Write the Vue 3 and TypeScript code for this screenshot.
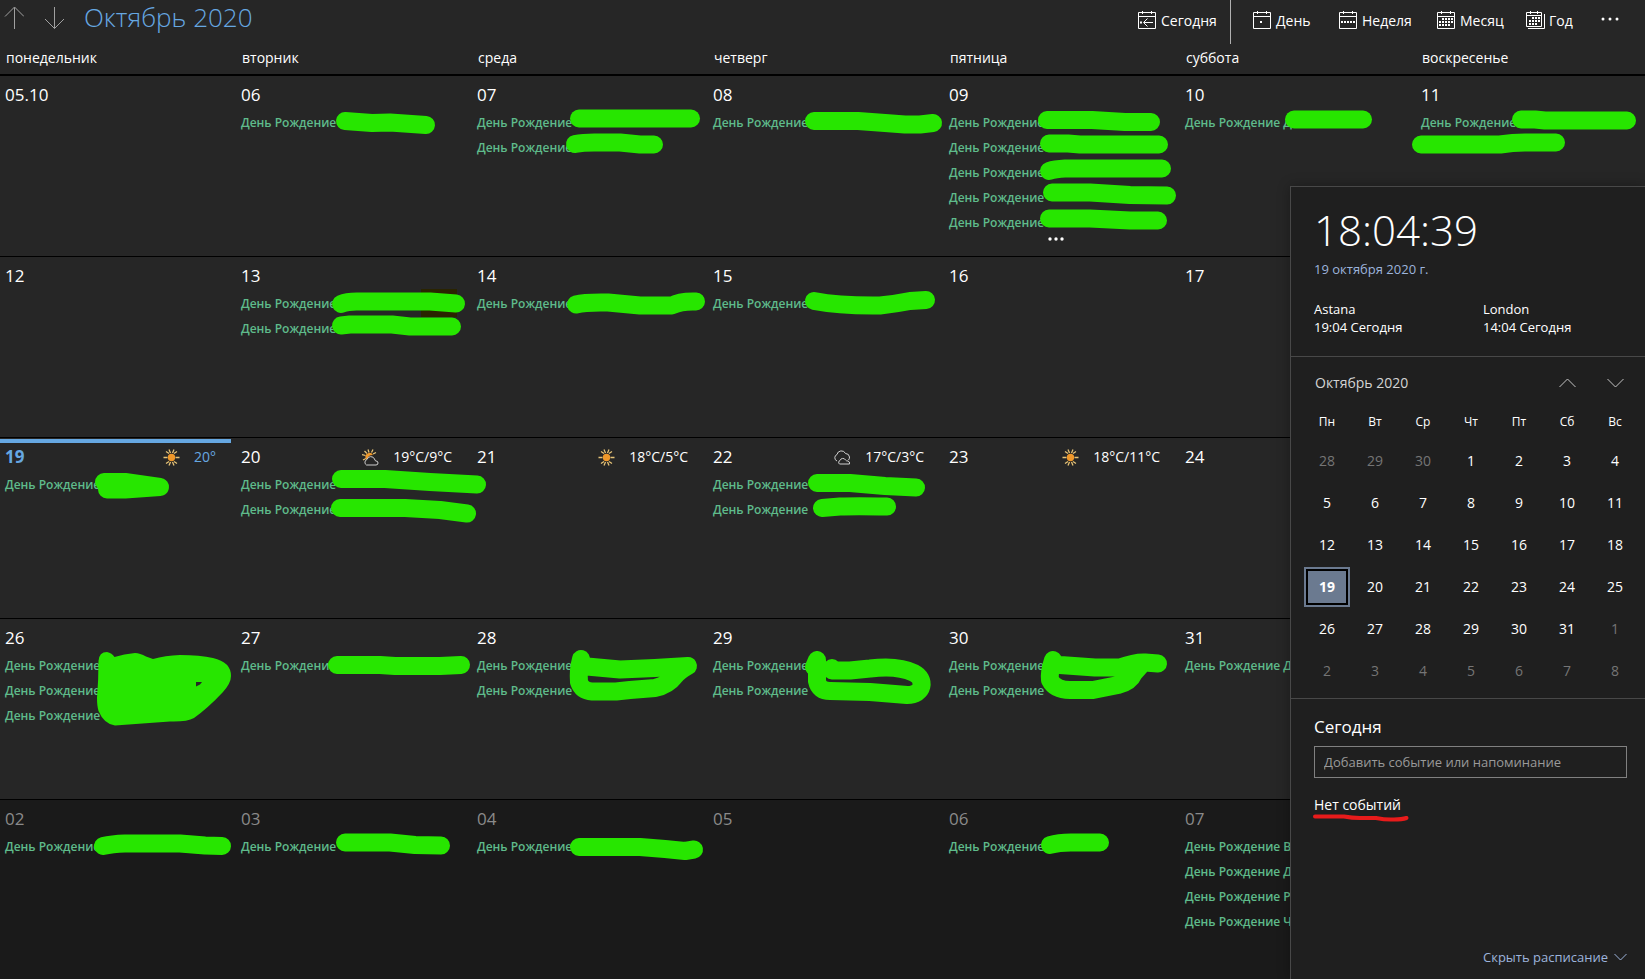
<script setup lang="ts">
type Sky = 'sun' | 'partly' | 'cloud'

interface Day {
  label: string
  events: string[]
  more?: boolean
  today?: boolean
  sky?: Sky
  temp?: string
}

const B = 'День Рождение'
const day = (label: string, count = 0, extra: Partial<Day> = {}): Day => ({
  label,
  events: Array.from({ length: count }, () => B),
  ...extra,
})

const weekdays = ['понедельник', 'вторник', 'среда', 'четверг', 'пятница', 'суббота', 'воскресенье']

/* the flyout occupies the last column from the second week on */
const weeks: Day[][] = [
  [day('05.10'), day('06', 1), day('07', 2), day('08', 1), day('09', 5, { more: true }), day('10', 0, { events: [B + ' Д'] }), day('11', 1)],
  [day('12'), day('13', 2), day('14', 1), day('15', 1), day('16'), day('17')],
  [
    day('19', 1, { today: true, sky: 'sun', temp: '20°' }),
    day('20', 2, { sky: 'partly', temp: '19°C/9°C' }),
    day('21', 0, { sky: 'sun', temp: '18°C/5°C' }),
    day('22', 2, { sky: 'cloud', temp: '17°C/3°C' }),
    day('23', 0, { sky: 'sun', temp: '18°C/11°C' }),
    day('24'),
  ],
  [day('26', 3), day('27', 1), day('28', 2), day('29', 2), day('30', 2), day('31', 0, { events: [B + ' Д'] })],
  [
    day('02', 1), day('03', 1), day('04', 1), day('05'), day('06', 1),
    day('07', 0, { events: [B + ' В', B + ' Д', B + ' Р', B + ' Ч'] }),
  ],
]

const miniHead = ['Пн', 'Вт', 'Ср', 'Чт', 'Пт', 'Сб', 'Вс']
const miniWeeks = Array.from({ length: 6 }, (_, w) =>
  Array.from({ length: 7 }, (_, d) => {
    const n = w * 7 + d - 2
    if (n < 1) return { n: n + 30, other: true, today: false }
    if (n > 31) return { n: n - 31, other: true, today: false }
    return { n, other: false, today: n === 19 }
  }),
)

const cities = [
  { name: 'Astana', time: '19:04 Сегодня' },
  { name: 'London', time: '14:04 Сегодня' },
]

/* squares inside each view icon: [x, y] */
const grid = (xs: number[], ys: number[]) => ys.flatMap((y) => xs.map((x) => [x, y]))
const views = [
  { label: 'День', dots: [[7, 10]] },
  { label: 'Неделя', dots: grid([2, 5, 8, 11, 14], [10]) },
  { label: 'Месяц', dots: [...grid([5, 8, 11, 14], [7]), ...grid([2, 5, 8, 11, 14], [10]), ...grid([2, 5, 8, 11], [13])] },
  { label: 'Год', year: true, dots: [...grid([6, 9, 12], [6]), ...grid([3, 6, 9, 12], [9]), ...grid([3, 6, 9], [12])] },
]

/* marker strokes that cover the names */
const marks = [
  'M345 121L372 123L390 122.500L426 125',
  'M579 118.500H691',
  'M575 144Q585 142 600 142.500H620L640 144.500H654',
  'M814 121H858L885 123L905 124.500L920 124.500L933 123',
  'M1047 120H1092L1125 122H1151',
  'M1049 143.500H1068L1080 144.500H1159',
  'M1049 171Q1055 169 1065 168.500H1162',
  'M1052 192.500H1090L1130 195L1167 195.500',
  'M1049 218.500H1090L1130 220.500H1158',
  'M1294 119.500H1363',
  'M1521 119.500H1535L1545 120.500H1627',
  'M1421 144.500H1500Q1515 142 1530 142.500H1556',
  'M341 304Q348 301 360 301.500H430L456 303.500',
  'M341 325.500L350 324.500H392L410 326.500H452',
  'M576 304.500Q585 302 608 302.500L640 305.500H672Q680 301 696 301.500',
  'M814 301Q840 306 880 305.500Q895 304 910 301L926 300',
  'M104 482H125L160 487M107 489.500H125L160 487',
  'M341 479H385L430 482L477 484.500',
  'M340 508H405L440 510L467 513.500',
  'M817 483H850L885 486L916 487.500',
  'M822 508L840 506.500Q855 506 887 506.500',
  'M337 665H380L395 666H440L461 665',
  'M581 659Q578 670 579 682Q582 691 592 691.500H616L630 690L655 688Q668 685 674 677Q679 671 688 666L655 668L620 669.500L587 666.500',
  'M817 660L814 667M817 660V681Q819 691 830 691L870 692L907 695C924 695 926 679 914 673Q898 665 870 668.500L850 670.500H832V668',
  'M1053 660Q1049 672 1050 680Q1055 690 1070 690H1093L1118 685Q1130 682 1134 673L1142 664M1060 665L1095 667.500H1120Q1135 662 1145 662.500L1158 663.500',
  'M103 846Q112 844 125 843.500H180L205 845.500L222 846',
  'M345 842.500H390L415 845L441 845.500',
  'M579 847H640L665 849L685 851L694 849.500',
  'M1050 845Q1060 842 1075 842.500H1100',
]
</script>

<template>
  <div class="app">
    <header class="top">
      <div class="period">
        <button class="arrow" aria-label="Назад">
          <svg width="20" height="24" viewBox="0 0 20 24"><path d="M10.500 23V1.500M1 10.500L10.500 1L20 10.500" /></svg>
        </button>
        <button class="arrow" aria-label="Вперёд">
          <svg width="20" height="24" viewBox="0 0 20 24"><path d="M10.500 1V22.500M1 13L10.500 22.500L20 13" /></svg>
        </button>
        <h1>Октябрь 2020</h1>
      </div>
      <nav class="tools">
        <button class="tool today-tool">
          <svg width="19" height="18" viewBox="0 0 19 18">
            <path d="M.500 1.500H17.500V17.500H.500ZM.500 5.500H17.500M4.500 0V3M13.500 0V3M6 11.500H15M9.500 7.500L5.500 11.500L9.500 15.500" />
            <rect x="2" y="10.500" width="2" height="2" />
          </svg>
          <span>Сегодня</span>
        </button>
        <button v-for="v in views" :key="v.label" class="tool">
          <svg width="19" height="18" viewBox="0 0 19 18">
            <path v-if="v.year" d="M.500 1.500H15.500V15.500H.500ZM.500 4.500H15.500M4.500 0V3M11.500 0V3M18.500 3V17.500H2" />
            <path v-else d="M.500 1.500H17.500V17.500H.500ZM.500 5.500H17.500M4.500 0V3M13.500 0V3" />
            <rect v-for="(d, i) in v.dots" :key="i" :x="d[0]" :y="d[1]" width="2" height="2" />
          </svg>
          <span>{{ v.label }}</span>
        </button>
        <button class="tool" aria-label="Ещё">
          <svg width="18" height="18" viewBox="0 0 18 18">
            <circle cx="2" cy="8" r="1.500" /><circle cx="9" cy="8" r="1.500" /><circle cx="16" cy="8" r="1.500" />
          </svg>
        </button>
      </nav>
    </header>

    <div class="weekdays">
      <span v-for="w in weekdays" :key="w">{{ w }}</span>
    </div>

    <main class="month">
      <section v-for="(week, wi) in weeks" :key="wi" class="week" :class="{ next: wi === 4 }">
        <article v-for="d in week" :key="d.label" class="day" :class="{ today: d.today }">
          <div class="day-head">
            <span class="num">{{ d.label }}</span>
            <span v-if="d.sky" class="weather">
              <svg width="17" height="17" viewBox="0 0 17 17">
                <template v-if="d.sky === 'sun'">
                  <path class="ray" d="M12.500 8.500H16.500M.500 8.500H4.500M11 4.500L14 2.500M6 4.500L3 2.500M11 12.500L14 14.500M6 12.500L3 14.500M9.500 4L11 .500M7.500 4L6 .500M9.500 13L11 16.500M7.500 13L6 16.500" />
                  <circle class="core" cx="8.500" cy="8.500" r="3.700" />
                </template>
                <template v-else-if="d.sky === 'partly'">
                  <path class="ray" d="M0 5.500L3.500 6.500M1 11L4 9.500M2.500 2L5 4.500M6 .500L7 3.500M11 .500L9.500 3.500M14 3.500L11 5" />
                  <path class="core" d="M4 10A4 4 0 0 1 11 6Q6 6 5.500 10Z" />
                  <path class="cloud" d="M4.500 16A3 3 0 0 1 5 10.500A4 4 0 0 1 12.500 10Q13 12 14 12A2 2 0 0 1 14 16Z" />
                </template>
                <template v-else>
                  <path class="cloud" d="M3 12A3.500 3.500 0 0 1 3 5.500A4.500 4.500 0 0 1 11.500 4.500Q15 4.500 15.500 8Q15.500 10 14.500 11M5.500 15A2 2 0 0 1 6 11.500A3 3 0 0 1 11.500 11Q12 12 14 12Q16 12.500 15.500 15Z" />
                </template>
              </svg>
              <span>{{ d.temp }}</span>
            </span>
          </div>
          <p v-for="(e, i) in d.events" :key="i" class="event">{{ e }}</p>
          <button v-if="d.more" class="more" aria-label="Показать все события">
            <svg width="16" height="4" viewBox="0 0 16 4">
              <circle cx="2" cy="2" r="1.700" /><circle cx="8" cy="2" r="1.700" /><circle cx="14" cy="2" r="1.700" />
            </svg>
          </button>
        </article>
      </section>
    </main>

    <aside class="flyout">
      <section class="clock">
        <time class="time">18:04:39</time>
        <a href="#" class="date">19 октября 2020 г.</a>
        <div class="cities">
          <div v-for="c in cities" :key="c.name">
            <div>{{ c.name }}</div>
            <div>{{ c.time }}</div>
          </div>
        </div>
      </section>

      <section class="mini">
        <div class="mini-head">
          <button class="mini-title">Октябрь 2020</button>
          <button class="chev" aria-label="Предыдущий месяц">
            <svg width="17" height="10" viewBox="0 0 17 10"><path d="M.500 9L8.500 1L16.500 9" /></svg>
          </button>
          <button class="chev" aria-label="Следующий месяц">
            <svg width="17" height="10" viewBox="0 0 17 10"><path d="M.500 1L8.500 9L16.500 1" /></svg>
          </button>
        </div>
        <table>
          <thead>
            <tr><th v-for="h in miniHead" :key="h" scope="col">{{ h }}</th></tr>
          </thead>
          <tbody>
            <tr v-for="(w, i) in miniWeeks" :key="i">
              <td v-for="(c, j) in w" :key="j">
                <button class="cell" :class="{ other: c.other, selected: c.today }">{{ c.n }}</button>
              </td>
            </tr>
          </tbody>
        </table>
      </section>

      <section class="agenda">
        <h2>Сегодня</h2>
        <input type="text" aria-label="Добавить событие или напоминание" placeholder="Добавить событие или напоминание" />
        <p>Нет событий</p>
        <button class="hide">
          <span>Скрыть расписание</span>
          <svg width="13" height="8" viewBox="0 0 13 8"><path d="M.500 1L6.500 7L12.500 1" /></svg>
        </button>
      </section>
    </aside>

    <svg class="ink" viewBox="0 0 1645 979" preserveAspectRatio="none" aria-hidden="true">
      <rect class="shade" x="421" y="289" width="36" height="28" />
      <path v-for="(m, i) in marks" :key="i" class="mark" :d="m" />
      <path
        class="blot"
        fill-rule="evenodd"
        d="M98.500 661Q99 652 107 652Q112 653 114.500 657Q124 654 135 653Q140 653 146 656.500L153 659Q165 655.500 180 655Q200 655 213 658Q231 662 231 676Q231 683 223 692Q208 708 194 718Q187 722 170 721.500L115 725.500Q104 724 98.500 711Q97 706 97 698Q98.500 680 98.500 661ZM196 682V686.500L200 684.500L202 682Z"
      />
      <path class="red" d="M1315 816.500H1344Q1352 818 1360 818H1376Q1386 820 1394 819.500Q1402 819.500 1406.500 818" />
    </svg>
  </div>
</template>

<style>
body {
  margin: 0;
  background: #262626;
}
</style>

<style scoped>
.app {
  position: relative;
  min-height: 100vh;
  display: flex;
  flex-direction: column;
  overflow: hidden;
  background: #262626;
  color: #fff;
  font-family: "Open Sans", "Noto Sans", sans-serif;
  font-size: 14px;
}

* {
  box-sizing: border-box;
}

button {
  padding: 0;
  border: 0;
  background: none;
  color: inherit;
  font: inherit;
}

h1,
h2,
p {
  margin: 0;
  font-weight: 400;
}

svg {
  display: block;
  flex: none;
}

.top {
  display: flex;
  justify-content: space-between;
  height: 44px;
}

.period {
  display: flex;
  align-items: center;
  gap: 20px;
  height: 36px;
  padding-left: 4px;
}

.arrow path {
  fill: none;
  stroke: #a0a0a0;
}

h1 {
  color: #66a8e2;
  font-size: 26px;
  font-weight: 300;
  line-height: 34px;
  padding-bottom: 2px;
  white-space: nowrap;
}

.tools {
  display: grid;
  grid-template-columns: 93px 108px 98px 89px 75px 44px;
}

.tool {
  display: flex;
  align-items: center;
  gap: 4px;
  height: 40px;
  white-space: nowrap;
}

.tool:nth-child(2) {
  padding-left: 22px;
}

.today-tool {
  height: 44px;
  padding-bottom: 4px;
  border-right: 1px solid #b0b0b0;
}

.tool path {
  fill: none;
  stroke: #fff;
}

.tool rect,
.tool circle,
.more circle {
  fill: #fff;
}

.weekdays,
.week {
  display: grid;
  grid-template-columns: repeat(7, minmax(0, 1fr));
  column-gap: 7px;
}

.weekdays {
  height: 32px;
  border-bottom: 2px solid #000;
  line-height: 28px;
}

.weekdays span {
  padding-left: 6px;
}

.month {
  flex: 1;
  display: grid;
  grid-template-rows: repeat(4, 181fr) 179fr;
}

.week {
  border-bottom: 1px solid #000;
}

.week.next {
  border-bottom: 0;
  background: #1a1a1a;
}

.next .num {
  color: #8a8a8a;
}

.day {
  position: relative;
  padding: 7px 0 0 5px;
}

.day-head {
  display: flex;
  justify-content: space-between;
  height: 24px;
  margin-bottom: 3px;
  line-height: 24px;
}

.num {
  font-size: 17px;
}

.weather {
  display: flex;
  align-items: center;
  gap: 14px;
  padding-right: 13px;
}

.today::before {
  content: "";
  position: absolute;
  top: 1px;
  left: 0;
  right: -2px;
  height: 4px;
  background: #66a8e2;
}

.today .day-head {
  color: #66a8e2;
}

.today .num {
  font-weight: 700;
}

.ray {
  fill: none;
  stroke: #e6c377;
  stroke-width: 1.3px;
}

.core {
  fill: #f0982a;
}

.cloud {
  fill: none;
  stroke: #d0d0d0;
}

.event {
  color: #5fbb8b;
  font-size: 12px;
  font-weight: 600;
  line-height: 25px;
  white-space: nowrap;
}

.more {
  display: block;
  margin: 2px auto 0;
  padding-right: 10px;
}

.flyout {
  position: absolute;
  top: 186px;
  right: 0;
  bottom: 0;
  width: 355px;
  display: flex;
  flex-direction: column;
  border: solid #484848;
  border-width: 1px 0 0 1px;
  background: #1f1f1f;
  box-shadow: 0 0 12px rgba(0, 0, 0, 0.3);
}

.clock {
  padding: 15px 24px 20px 23px;
  border-bottom: 1px solid #484848;
  font-size: 13px;
}

.time {
  display: block;
  font-size: 42px;
  font-weight: 300;
  line-height: 56px;
}

.date {
  display: block;
  margin: 1px 0 21px;
  color: #9db4dc;
  line-height: 20px;
  text-decoration: none;
}

.cities {
  display: grid;
  grid-template-columns: 169px 1fr;
  line-height: 18px;
}

.mini {
  padding: 16px 6px 6px 12px;
  border-bottom: 1px solid #484848;
}

.mini-head {
  display: grid;
  grid-template-columns: 1fr 48px 48px;
  height: 20px;
  margin-bottom: 12px;
}

.mini-title {
  padding-left: 12px;
  color: #d4d4d4;
  line-height: 20px;
  text-align: left;
}

.chev {
  display: flex;
  align-items: center;
  justify-content: center;
}

.chev path {
  fill: none;
  stroke: #c4c4c4;
}

table {
  width: 100%;
  border-collapse: collapse;
  table-layout: fixed;
}

th {
  height: 35px;
  padding: 0 0 2px;
  font-size: 12px;
  font-weight: 400;
}

td {
  height: 42px;
  padding: 0;
}

.cell {
  display: block;
  width: 46px;
  height: 40px;
  margin: 0 auto;
  padding-bottom: 2px;
  text-align: center;
}

.other {
  color: #757575;
}

.selected {
  border: 2px solid #6b7a90;
  background: #6b7a90;
  box-shadow: inset 0 0 0 2px #000;
  font-weight: 700;
}

.agenda {
  flex: 1;
  display: flex;
  flex-direction: column;
  padding: 16px 18px 12px 23px;
}

h2 {
  margin-bottom: 7px;
  font-size: 17px;
  line-height: 24px;
}

input {
  width: 100%;
  height: 32px;
  margin-bottom: 17px;
  padding: 0 9px;
  border: 1px solid #808080;
  border-radius: 0;
  background: transparent;
  color: #fff;
  font-family: inherit;
  font-size: 13px;
}

input::placeholder {
  color: #9a9a9a;
  opacity: 1;
}

.agenda p {
  line-height: 20px;
}

.hide {
  display: flex;
  align-items: center;
  align-self: flex-end;
  gap: 6px;
  margin-top: auto;
  color: #9db4dc;
  font-size: 13px;
  line-height: 20px;
}

.hide path {
  fill: none;
  stroke: #9db4dc;
}

.ink {
  position: absolute;
  inset: 0;
  width: 100%;
  height: 100%;
  pointer-events: none;
}

.shade {
  fill: #2a2400;
}

.mark {
  fill: none;
  stroke: #27e600;
  stroke-width: 18px;
  stroke-linecap: round;
  stroke-linejoin: round;
}

.blot {
  fill: #27e600;
}

.red {
  fill: none;
  stroke: #e81b1b;
  stroke-width: 4px;
  stroke-linecap: round;
}
</style>
